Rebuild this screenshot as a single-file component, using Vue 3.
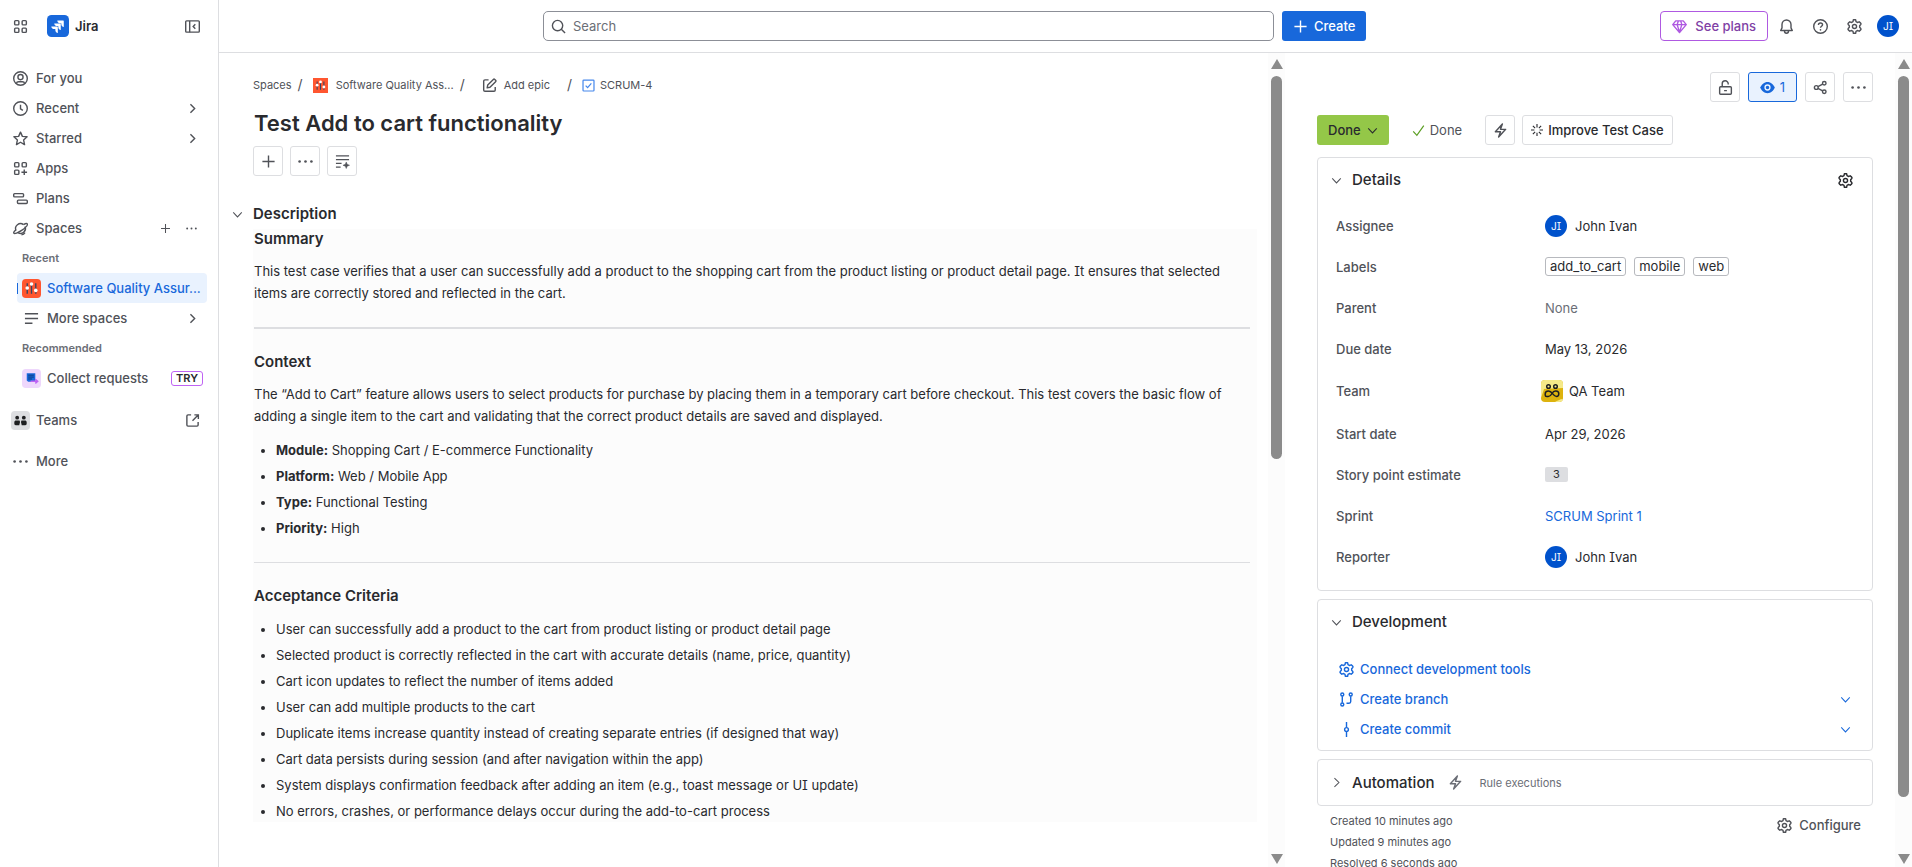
<template>
  <div class="app">
    <nav class="sidebar" aria-label="Sidebar">
      <div class="sidebar-top">
        <button class="icon-btn" aria-label="Switch sites or apps"><Icon name="switcher" /></button>
        <a href="#" class="brand">
          <svg class="logo" viewBox="0 0 24 24">
            <rect width="24" height="24" rx="5" fill="#1868db" />
            <path fill="#fff" d="M9.1 15.3H7.9c-1.9 0-3.2-1.1-3.2-2.8h6.5c.3 0 .6.2.6.6v6.400c-1.600 0-2.700-1.300-2.700-3.100zM12.300 12.100h-1.200c-1.900 0-3.200-1.100-3.200-2.800h6.500c.3 0 .6.3.6.6v6.400c-1.600 0-2.700-1.300-2.700-3.100zM15.600 8.900h-1.200c-1.900 0-3.200-1.200-3.200-2.900h6.500c.4 0 .6.3.6.6V13c-1.600 0-2.700-1.300-2.700-3.100z" />
          </svg>
          <span>Jira</span>
        </a>
        <button class="icon-btn collapse" aria-label="Collapse sidebar"><Icon name="collapse" /></button>
      </div>

      <ul class="nav">
        <li v-for="item in navItems" :key="item.label" class="nav-row">
          <a href="#" class="nav-link"><Icon :name="item.icon" />{{ item.label }}</a>
          <Icon v-if="item.chevron" name="chevronRight" class="row-chevron" />
          <span v-if="item.actions" class="nav-actions">
            <button class="icon-btn" aria-label="Create space"><Icon name="plus" class="small" /></button>
            <button class="icon-btn" aria-label="More actions"><Icon name="dots" class="small" /></button>
          </span>
        </li>
      </ul>

      <div class="nav-sub">
        <h2 class="nav-heading">Recent</h2>
        <a href="#" class="sub-link selected">
          <SpaceIcon class="tile" />
          <span>Software Quality Assur...</span>
        </a>
        <a href="#" class="sub-link">
          <Icon name="list" class="tile-icon" />
          <span>More spaces</span>
          <Icon name="chevronRight" class="row-chevron" />
        </a>
        <h2 class="nav-heading">Recommended</h2>
        <a href="#" class="sub-link">
          <svg class="tile" viewBox="0 0 20 20">
            <rect width="20" height="20" rx="4" fill="#eed7fc" />
            <path d="M5 4.500h9v9H6.500L5 12z" fill="#1868db" />
            <path d="M6.500 6.500h6M6.500 8.500h6M6.500 10.500h4" stroke="#09326c" stroke-width=".8" />
            <path d="M9 13h7M14 10.800l2.500 2.200-2.500 2.200" stroke="#bf63f3" stroke-width="1.600" fill="none" />
          </svg>
          <span>Collect requests</span>
          <span class="try">TRY</span>
        </a>
      </div>

      <ul class="nav nav-bottom">
        <li class="nav-row">
          <a href="#" class="nav-link teams">
            <svg class="tile" viewBox="0 0 20 20">
              <rect width="20" height="20" rx="4" fill="#dddee1" />
              <g fill="#1e1f21">
                <circle cx="6.500" cy="7" r="2" /><circle cx="13.500" cy="7" r="2" />
                <path d="M3.500 11.800c0-1.200.8-1.800 2-1.800H9l.5 1.500-.8 3.500H5c-1 0-1.500-.6-1.500-1.500zM16.500 11.800c0-1.200-.8-1.800-2-1.800H11l-.5 1.500.8 3.500H15c1 0 1.500-.6 1.500-1.500z" />
              </g>
            </svg>
            Teams
          </a>
          <Icon name="external" class="row-external" />
        </li>
        <li class="nav-row">
          <a href="#" class="nav-link"><Icon name="dots" />More</a>
        </li>
      </ul>
    </nav>

    <div class="page">
      <header class="header">
        <div class="header-center">
          <label class="search">
            <Icon name="search" />
            <input type="search" placeholder="Search" aria-label="Search" />
          </label>
          <button class="create"><Icon name="plus" />Create</button>
        </div>
        <div class="header-actions">
          <button class="plans"><Icon name="gem" />See plans</button>
          <button class="icon-btn" aria-label="Notifications"><Icon name="bell" /></button>
          <button class="icon-btn" aria-label="Help"><Icon name="help" /></button>
          <button class="icon-btn" aria-label="Settings"><Icon name="gear" /></button>
          <button class="avatar" aria-label="Your profile">JI</button>
        </div>
      </header>

      <div class="columns">
        <main class="issue">
          <div class="issue-body">
            <nav class="breadcrumbs" aria-label="Breadcrumbs">
              <a href="#">Spaces</a><i>/</i>
              <a href="#" class="crumb-space"><SpaceIcon square class="crumb-tile" />Software Quality Ass...</a><i>/</i>
              <a href="#" class="crumb-epic"><Icon name="edit" />Add epic</a><i>/</i>
              <a href="#" class="crumb-key">
                <svg class="task" viewBox="0 0 16 16" fill="none" stroke="#4688ec" stroke-width="1.500">
                  <rect x="1.250" y="1.250" width="13.500" height="13.500" rx="1" /><path d="M4.500 8.200l2.400 2.500 4.600-5.400" />
                </svg>
                SCRUM-4
              </a>
            </nav>
            <h1>Test Add to cart functionality</h1>
            <div class="quick-actions">
              <button class="box-btn" aria-label="Add"><Icon name="plus" /></button>
              <button class="box-btn" aria-label="More"><Icon name="dots" /></button>
              <button class="box-btn" aria-label="Improve description"><Icon name="textSpark" /></button>
            </div>

            <section>
              <h2 class="section-title">
                <button class="icon-btn" aria-label="Collapse description"><Icon name="chevronDown" class="small" /></button>
                Description
              </h2>
              <div class="description">
                <h3>Summary</h3>
                <p>This test case verifies that a user can successfully add a product to the shopping cart from the product listing or product detail page. It ensures that selected items are correctly stored and reflected in the cart.</p>
                <hr class="thick" />
                <h3>Context</h3>
                <p>The “Add to Cart” feature allows users to select products for purchase by placing them in a temporary cart before checkout. This test covers the basic flow of adding a single item to the cart and validating that the correct product details are saved and displayed.</p>
                <ul>
                  <li v-for="fact in facts" :key="fact.name"><strong>{{ fact.name }}:</strong> {{ fact.value }}</li>
                </ul>
                <hr />
                <h3>Acceptance Criteria</h3>
                <ul>
                  <li v-for="line in criteria" :key="line">{{ line }}</li>
                </ul>
              </div>
            </section>
          </div>
          <ScrollRail :size="49.7" />
        </main>

        <aside class="panel">
          <div class="panel-body">
            <div class="toolbar">
              <button class="box-btn" aria-label="No restrictions"><Icon name="lock" /></button>
              <button class="box-btn watching" aria-label="Watch options"><Icon name="eye" />1</button>
              <button class="box-btn" aria-label="Share"><Icon name="share" /></button>
              <button class="box-btn" aria-label="Actions"><Icon name="dots" /></button>
            </div>
            <div class="status-row">
              <button class="status">Done<Icon name="chevronDown" class="small" /></button>
              <span class="resolution"><Icon name="check" />Done</span>
              <button class="box-btn" aria-label="Run automation"><Icon name="bolt" /></button>
              <button class="box-btn improve"><Icon name="spark" />Improve Test Case</button>
            </div>

            <section class="card details">
              <div class="card-head">
                <button class="card-toggle"><Icon name="chevronDown" class="small" />Details</button>
                <button class="icon-btn dark" aria-label="Configure fields"><Icon name="gear" /></button>
              </div>
              <dl>
                <div class="field">
                  <dt>Assignee</dt>
                  <dd><span class="avatar">JI</span>John Ivan</dd>
                </div>
                <div class="field">
                  <dt>Labels</dt>
                  <dd><a v-for="tag in tags" :key="tag" href="#" class="tag">{{ tag }}</a></dd>
                </div>
                <div class="field">
                  <dt>Parent</dt>
                  <dd class="none">None</dd>
                </div>
                <div class="field">
                  <dt>Due date</dt>
                  <dd>May 13, 2026</dd>
                </div>
                <div class="field tall">
                  <dt>Team</dt>
                  <dd class="team">
                    <svg class="team-tile" viewBox="0 0 22 22">
                      <rect width="22" height="22" rx="4" fill="#ddb30e" />
                      <path d="M4 0h14a4 4 0 0 1 4 4v4L3 9 0 18V4a4 4 0 0 1 4-4z" fill="#f5e989" />
                      <path d="M14 22c2-1 5-3 8-3a4 4 0 0 1-4 3z" fill="#f5e989" />
                      <g fill="none" stroke="#1e1f21" stroke-width="1.500">
                        <circle cx="7.500" cy="6.500" r="1.800" /><circle cx="14.500" cy="6.500" r="1.800" />
                        <path d="M11 13.500c.8-1.500 1.800-2.500 3.500-2.500h.5c1.800 0 2.800 1 2.800 2.800 0 1.700-.8 2.700-2.300 2.700-3.500 0-4-5.500-8-5.500C5.200 11 4.200 12.200 4.200 14v1c0 1 .6 1.500 1.500 1.500h1.600c1.800 0 2.700-1.200 3.700-3z" />
                      </g>
                    </svg>
                    QA Team
                  </dd>
                </div>
                <div class="field">
                  <dt>Start date</dt>
                  <dd>Apr 29, 2026</dd>
                </div>
                <div class="field">
                  <dt>Story point estimate</dt>
                  <dd><span class="points">3</span></dd>
                </div>
                <div class="field">
                  <dt>Sprint</dt>
                  <dd><a href="#">SCRUM Sprint 1</a></dd>
                </div>
                <div class="field">
                  <dt>Reporter</dt>
                  <dd><span class="avatar">JI</span>John Ivan</dd>
                </div>
              </dl>
            </section>

            <section class="card development">
              <div class="card-head">
                <button class="card-toggle"><Icon name="chevronDown" class="small" />Development</button>
              </div>
              <div class="dev-row">
                <a href="#"><Icon name="gear" />Connect development tools</a>
              </div>
              <div class="dev-row">
                <a href="#"><Icon name="branch" />Create branch</a>
                <button class="icon-btn" aria-label="Branch options"><Icon name="chevronDown" class="small" /></button>
              </div>
              <div class="dev-row">
                <a href="#"><Icon name="commit" />Create commit</a>
                <button class="icon-btn" aria-label="Commit options"><Icon name="chevronDown" class="small" /></button>
              </div>
            </section>

            <section class="card automation">
              <button class="card-toggle"><Icon name="chevronClosed" class="small" />Automation</button>
              <Icon name="bolt" />
              <span class="rule">Rule executions</span>
            </section>

            <footer class="footer">
              <div class="dates">
                <p>Created 10 minutes ago</p>
                <p>Updated 9 minutes ago</p>
                <p>Resolved 6 seconds ago</p>
              </div>
              <button class="configure"><Icon name="gear" />Configure</button>
            </footer>
          </div>
          <ScrollRail :size="93.5" />
        </aside>
      </div>
    </div>
  </div>
</template>

<script setup>
import { h } from 'vue'

const glyphs = {
  switcher: '<rect x="1.750" y="1.750" width="4.500" height="4.500" rx="1"/><rect x="9.750" y="1.750" width="4.500" height="4.500" rx="1"/><rect x="1.750" y="9.750" width="4.500" height="4.500" rx="1"/><rect x="9.750" y="9.750" width="4.500" height="4.500" rx="1"/>',
  collapse: '<rect x=".75" y="2" width="14.500" height="12" rx="1"/><path d="M5 2v12M11 5.500L8.700 8l2.300 2.500"/>',
  person: '<circle cx="8" cy="8" r="7.250"/><circle cx="8" cy="6.500" r="2.750"/><path d="M3.500 13.500c.4-1.600 1.500-2 2.500-2h4c1 0 2.100.4 2.500 2"/>',
  clock: '<circle cx="8" cy="8" r="7.250"/><path d="M8 4v4.300l2.500 1.700"/>',
  star: '<path d="M8 1.200l2 4.500 5 .5-3.700 3.300 1 5L8 12l-4.300 2.500 1-5L1 6.200l5-.5z" stroke-linejoin="round"/>',
  apps: '<rect x="1.750" y="1.750" width="4.500" height="4.500" rx="1"/><rect x="9.750" y="1.750" width="4.500" height="4.500" rx="1"/><rect x="1.750" y="9.750" width="4.500" height="4.500" rx="1"/><path d="M12 9v6M9 12h6"/>',
  plans: '<rect x=".75" y="2.750" width="10.500" height="3.500" rx="1"/><rect x="4.750" y="9.750" width="10.500" height="3.500" rx="1"/>',
  planet: '<path d="M3.200 10.200A5.300 5.300 0 0 1 11.200 3.800M12.800 5.800a5.300 5.300 0 0 1-7.200 6.900"/><path d="M11.200 3.800c2.200-1.200 3.600-1.300 4-.7.700 1.100-2 4.200-6 6.900-4 2.700-7.600 4.100-8.300 3-.4-.6.300-2 2.300-3.600"/><path d="M9 14.800c1.600-.4 3-1.300 3.800-2.500" />',
  plus: '<path d="M8 1.500v13M1.500 8h13"/>',
  dots: '<g fill="currentColor" stroke="none"><circle cx="1.700" cy="8" r="1.400"/><circle cx="8" cy="8" r="1.400"/><circle cx="14.300" cy="8" r="1.400"/></g>',
  chevronRight: '<path d="M5.800 3.500L10.300 8l-4.500 4.500"/>',
  chevronClosed: '<path d="M5 1.800L11.500 8 5 14.200"/>',
  chevronDown: '<path d="M1.800 5L8 11.500 14.200 5"/>',
  list: '<path d="M1 3h14M1 8h14M1 13h8"/>',
  external: '<path d="M6.500 2H3.200c-.8 0-1.200.4-1.200 1.200v9.600c0 .8.400 1.200 1.200 1.200h9.600c.8 0 1.200-.4 1.200-1.200V9.500M10 2h4.250v4.500M14 2.200L8 8.200"/>',
  search: '<circle cx="7" cy="7" r="5.500"/><path d="M11 11l4 4"/>',
  gem: '<path d="M4 2h8l3.200 4L8 14.500.8 6zM.8 6h14.400M5.500 6L8 14l2.500-8M5.500 6l1.300-4M10.500 6L9.200 2" stroke-linejoin="round"/>',
  bell: '<path d="M3.200 9.500V5.800a4.800 4.800 0 0 1 9.600 0v3.700l1.400 2.750H1.800zM5.800 12.500c0 1.600 1 2.700 2.200 2.700s2.200-1.100 2.200-2.700" stroke-linejoin="round"/>',
  help: '<circle cx="8" cy="8" r="7.250"/><path d="M5.800 6.300c0-1.400 1-2.100 2.200-2.100s2.200.7 2.200 2c0 1.500-2.200 1.500-2.200 3.200"/><circle cx="8" cy="11.500" r=".9" fill="currentColor" stroke="none"/>',
  gear: '<path d="M6.400 2.900L6.800.8h2.400l.4 2.100 1.400.8 2-.7 1.600 1.400c.4.400.4.900.1 1.400L13.500 7.200v1.600l1.200 1.400c.3.500.3 1-.1 1.400L13 13l-2-.7-1.400.8-.4 2.100H6.800l-.4-2.100-1.400-.8-2 .7-1.600-1.400c-.4-.4-.4-.9-.1-1.400l1.200-1.400V7.200L1.300 5.800c-.3-.5-.3-1 .1-1.400L3 3l2 .7z" stroke-linejoin="round"/><circle cx="8" cy="8" r="2.200"/>',
  edit: '<path d="M7 2H3.200C2.300 2 1.800 2.500 1.800 3.300v9.600c0 .8.500 1.300 1.400 1.300h9.600c.8 0 1.300-.5 1.300-1.300V9.500M5.500 10.500l.6-3 6-6c.5-.5 1-.5 1.500 0l.9.9c.5.500.5 1 0 1.500l-6 6z" stroke-linejoin="round"/>',
  textSpark: '<path d="M1 2h14M1 6h14M1 10h6M1 14h5"/><path d="M12 8.500l1 2.500 2.500 1-2.500 1-1 2.500-1-2.500-2.500-1 2.500-1z" fill="currentColor" stroke-width=".5"/>',
  lock: '<rect x="1.750" y="7.250" width="12.500" height="8" rx="1"/><path d="M4.500 7V4a3.200 3.200 0 0 1 6.400 0v.8M6.500 11.300h3"/>',
  eye: '<path d="M8 2c3.500 0 6.500 2.700 7.700 6-1.200 3.300-4.200 6-7.700 6S1.500 11.300.3 8C1.500 4.700 4.500 2 8 2z" fill="currentColor" stroke="none"/><circle cx="8" cy="8" r="2.600" stroke="#e9f2fe"/>',
  share: '<circle cx="3.500" cy="8" r="2"/><circle cx="12" cy="3.500" r="1.900"/><circle cx="12" cy="12.500" r="1.900"/><path d="M5.300 7.100l5-2.700M5.300 8.900l5 2.700"/>',
  check: '<path d="M1.500 9l4.500 5 8.500-12"/>',
  bolt: '<path d="M10 1L2.500 9.250H8L6 15l7.500-8.250H8z" stroke-linejoin="round"/>',
  spark: '<path d="M8 0v4.500M8 11.500V16M0 8h4.500M11.500 8H16M2.500 2.500l3 3M10.500 10.500l3 3M13.500 2.500l-3 3M5.500 10.500l-3 3"/>',
  branch: '<circle cx="3.500" cy="2.700" r="1.600"/><circle cx="3.500" cy="13.300" r="1.600"/><circle cx="12.500" cy="2.700" r="1.600"/><path d="M3.500 4.500v7M12.500 4.500v5.700c0 1.200-.6 1.800-1.800 1.800H8"/>',
  commit: '<path d="M8 0v5.500M8 10.500V16"/><circle cx="8" cy="8" r="2"/>'
}

const Icon = (props) => h('svg', {
  class: 'icon',
  viewBox: '0 0 16 16',
  fill: 'none',
  stroke: 'currentColor',
  'stroke-width': 1.5,
  'aria-hidden': 'true',
  innerHTML: glyphs[props.name]
})
Icon.props = ['name']

const SpaceIcon = (props) => h('svg', {
  viewBox: '0 0 20 20',
  'aria-hidden': 'true',
  innerHTML: `<rect width="20" height="20" rx="${props.square ? 0 : 4}" fill="#ff5630"/>
    <path d="M5.500 4.500v11M10 4v11.500M14.500 4.500v11" stroke="#344563" stroke-width="1.400"/>
    <g fill="#fff"><circle cx="5.500" cy="9.500" r="1.900"/><circle cx="10" cy="5.200" r="1.900"/><circle cx="14.500" cy="12" r="1.900"/></g>`
})
SpaceIcon.props = { square: Boolean }

const ScrollRail = (props) => h('div', { class: 'rail', 'aria-hidden': 'true' }, [
  h('span', { class: 'rail-up' }),
  h('div', { class: 'rail-track' }, [
    h('div', { class: 'rail-thumb', style: { height: `${props.size}%` } })
  ]),
  h('span', { class: 'rail-down' })
])
ScrollRail.props = ['size']

const navItems = [
  { label: 'For you', icon: 'person' },
  { label: 'Recent', icon: 'clock', chevron: true },
  { label: 'Starred', icon: 'star', chevron: true },
  { label: 'Apps', icon: 'apps' },
  { label: 'Plans', icon: 'plans' },
  { label: 'Spaces', icon: 'planet', actions: true }
]

const facts = [
  { name: 'Module', value: 'Shopping Cart / E-commerce Functionality' },
  { name: 'Platform', value: 'Web / Mobile App' },
  { name: 'Type', value: 'Functional Testing' },
  { name: 'Priority', value: 'High' }
]

const criteria = [
  'User can successfully add a product to the cart from product listing or product detail page',
  'Selected product is correctly reflected in the cart with accurate details (name, price, quantity)',
  'Cart icon updates to reflect the number of items added',
  'User can add multiple products to the cart',
  'Duplicate items increase quantity instead of creating separate entries (if designed that way)',
  'Cart data persists during session (and after navigation within the app)',
  'System displays confirmation feedback after adding an item (e.g., toast message or UI update)',
  'No errors, crashes, or performance delays occur during the add-to-cart process'
]

const tags = ['add_to_cart', 'mobile', 'web']
</script>

<style>
body {
  background: #fff;
}

.rail {
  flex: none;
  width: 17px;
  box-sizing: border-box;
  padding: 6px 0 3px;
  display: flex;
  flex-direction: column;
  align-items: center;
  gap: 7px;
  background: #fcfcfc;
}

.rail-up,
.rail-down {
  border: 6px solid transparent;
  border-top-width: 0;
  border-bottom: 10px solid #8b8b8b;
}

.rail-down {
  border-top: 10px solid #8b8b8b;
  border-bottom-width: 0;
}

.rail-track {
  flex: 1;
  width: 11px;
}

.rail-thumb {
  border-radius: 6px;
  background: #8b8b8b;
}
</style>

<style scoped>
.app {
  display: flex;
  height: 100vh;
  overflow: hidden;
  font-family: Inter, "Liberation Sans", sans-serif;
  font-feature-settings: "cv08";
  font-size: 13px;
  line-height: 20px;
  color: #292a2e;
}

a {
  color: inherit;
  text-decoration: none;
}

button {
  font: inherit;
  font-feature-settings: inherit;
  color: inherit;
  border: 0;
  padding: 0;
  background: none;
  cursor: pointer;
}

h1, h2, h3, p, ul, dl, dd {
  margin: 0;
  padding: 0;
}

.icon {
  flex: none;
  width: 15px;
  height: 15px;
}

.icon.small {
  width: 11px;
  height: 11px;
}

.icon-btn {
  display: flex;
  align-items: center;
  justify-content: center;
  color: #505258;
}

.icon-btn.dark {
  color: #292a2e;
}

/* sidebar */
.sidebar {
  flex: none;
  width: 218px;
  border-right: 1px solid #dddee1;
  color: #505258;
  font-weight: 500;
}

.sidebar-top {
  display: flex;
  align-items: center;
  height: 52px;
  padding: 0 18px 0 13px;
  margin-bottom: 11px;
}

.brand {
  display: flex;
  align-items: center;
  gap: 6px;
  margin-left: 19px;
  font-weight: 600;
  color: #292a2e;
}

.logo {
  width: 22px;
  height: 22px;
}

.collapse {
  margin-left: auto;
}

.nav {
  list-style: none;
  padding: 0 17px 0 13px;
}

.nav-row {
  display: flex;
  align-items: center;
  height: 30px;
}

.nav-link {
  flex: 1;
  display: flex;
  align-items: center;
  gap: 8px;
}

.nav-actions {
  display: flex;
  gap: 15px;
  margin-right: 4px;
}

.row-chevron {
  margin-left: auto;
}

.nav-row .row-chevron,
.row-external {
  margin-right: 1px;
}

.nav-sub {
  padding: 0 11px 0 17px;
}

.nav-heading {
  padding-left: 5px;
  font-size: 11px;
  font-weight: 600;
  line-height: 30px;
  color: #6b6e76;
}

.sub-link {
  display: flex;
  align-items: center;
  gap: 6px;
  height: 30px;
  padding: 0 7px 0 5px;
  border-radius: 4px;
  white-space: nowrap;
}

.sub-link.selected {
  padding-right: 0;
  background: linear-gradient(#1868db, #1868db) left center / 1px 11px no-repeat #e9f2fe;
  color: #1868db;
}

.tile {
  flex: none;
  width: 19px;
  height: 19px;
}

.tile-icon {
  margin: 0 2px;
}

.try {
  margin-left: auto;
  margin-right: -3px;
  padding: 0 4px;
  border: 1px solid #bf63f3;
  border-radius: 3px;
  font-size: 11px;
  font-weight: 600;
  line-height: 13px;
  color: #292a2e;
}

.nav-bottom {
  display: flex;
  flex-direction: column;
  gap: 11px;
  margin-top: 12px;
}

.teams {
  gap: 6px;
  margin-left: -2px;
}

/* header */
.page {
  flex: 1;
  min-width: 0;
  display: flex;
  flex-direction: column;
}

.header {
  flex: none;
  display: flex;
  align-items: center;
  height: 52px;
  padding: 0 13px 0 30px;
  border-bottom: 1px solid #dddee1;
}

.header-center {
  flex: 1;
  display: flex;
  justify-content: center;
  gap: 8px;
}

.search {
  flex: 1;
  max-width: 731px;
  box-sizing: border-box;
  display: flex;
  align-items: center;
  gap: 7px;
  height: 30px;
  padding: 0 7px;
  border: 1px solid #8c8f97;
  border-radius: 5px;
  color: #505258;
}

.search input {
  flex: 1;
  padding: 0;
  border: 0;
  outline: 0;
  background: none;
  font: inherit;
}

.search input::placeholder {
  color: #6b6e76;
  opacity: 1;
}

.create {
  display: flex;
  align-items: center;
  gap: 6px;
  height: 30px;
  padding: 0 11px;
  border-radius: 3px;
  background: #1868db;
  color: #fff;
  font-weight: 500;
}

.header-actions {
  display: flex;
  align-items: center;
  gap: 19px;
}

.header-actions .avatar {
  margin-left: -4px;
}

.plans {
  display: flex;
  align-items: center;
  gap: 8px;
  height: 30px;
  margin-right: -8px;
  padding: 0 11px;
  border: 1px solid #af59e1;
  border-radius: 4px;
  color: #803fa5;
  font-weight: 500;
}

.plans .icon {
  color: #af59e1;
}

.avatar {
  width: 22px;
  height: 22px;
  border-radius: 50%;
  background: #0052cc;
  color: #fff;
  font-size: 10px;
  line-height: 22px;
  text-align: center;
}

/* issue column */
.columns {
  flex: 1;
  min-height: 0;
  display: grid;
  grid-template-columns: minmax(0, 1fr) 627px;
}

.issue {
  display: flex;
  min-height: 0;
}

.issue-body {
  flex: 1;
  min-width: 0;
  padding: 22px 11px 0 34px;
}

.breadcrumbs {
  display: flex;
  align-items: center;
  font-size: 11px;
  color: #505258;
}

.breadcrumbs a {
  display: flex;
  align-items: center;
}

.breadcrumbs i {
  font-style: normal;
  font-size: 14px;
  margin: 0 6px;
}

.crumb-space {
  gap: 8px;
  margin-left: 4px;
}

.crumb-epic {
  gap: 7px;
  margin: 0 11px;
}

.crumb-key {
  gap: 5px;
  margin-left: 4px;
}

.crumb-tile {
  width: 15px;
  height: 15px;
}

.task {
  width: 13px;
  height: 13px;
}

h1 {
  margin: 14px 0 8px 1px;
  font-size: 22px;
  font-weight: 600;
  line-height: 29px;
}

.quick-actions {
  display: flex;
  gap: 7px;
}

.box-btn {
  display: flex;
  align-items: center;
  justify-content: center;
  gap: 5px;
  box-sizing: border-box;
  width: 30px;
  height: 30px;
  border: 1px solid #dddee1;
  border-radius: 3px;
  color: #505258;
}

.section-title {
  display: flex;
  align-items: center;
  gap: 10px;
  margin: 28px 0 5px -21px;
  font-size: 15px;
  font-weight: 600;
  line-height: 20px;
}

.description {
  padding: 0 7px 0 1px;
  background: #fcfcfc;
}

.description h3 {
  font-size: 15px;
  font-weight: 600;
  line-height: 20px;
}

.description p {
  margin-top: 11px;
  line-height: 22px;
}

.description hr {
  height: 1px;
  margin: 23px 0;
  border: 0;
  background: #dddee1;
}

.description hr.thick {
  height: 2px;
}

.description ul {
  margin-top: 12px;
  padding-left: 22px;
  line-height: 22px;
}

.description li + li {
  margin-top: 4px;
}

.description strong {
  font-weight: 700;
}

/* right panel */
.panel {
  display: flex;
  min-height: 0;
  overflow: hidden;
}

.panel-body {
  flex: 1;
  min-width: 0;
  padding: 19px 22px 0 32px;
}

.toolbar {
  display: flex;
  justify-content: flex-end;
  gap: 8px;
}

.watching {
  width: 49px;
  border-color: #1868db;
  background: #e9f2fe;
  color: #1868db;
}

.status-row {
  display: flex;
  align-items: center;
  gap: 7px;
  margin: 13px 0 12px;
}

.status {
  display: flex;
  align-items: center;
  gap: 6px;
  height: 30px;
  padding: 0 11px;
  border-radius: 3px;
  background: #94c748;
  font-weight: 500;
}

.resolution {
  display: flex;
  align-items: center;
  gap: 5px;
  margin: 0 16px;
  color: #505258;
}

.resolution .icon {
  width: 13px;
  height: 13px;
  color: #5b9e23;
}

.improve {
  width: auto;
  padding: 0 8px;
  color: #292a2e;
  font-feature-settings: normal;
  font-weight: 500;
}

.improve .icon {
  width: 12px;
  height: 12px;
}

.card {
  border: 1px solid #dddee1;
  border-radius: 4px;
  margin-bottom: 8px;
}

.card-head {
  display: flex;
  align-items: center;
  justify-content: space-between;
  height: 44px;
  padding: 0 19px 0 13px;
}

.card-toggle {
  display: flex;
  align-items: center;
  gap: 10px;
  font-size: 15px;
  font-weight: 500;
}

.card-toggle .icon {
  color: #505258;
}

.details {
  padding-bottom: 13px;
}

.details .card-head {
  margin-bottom: 3px;
}

.field {
  display: grid;
  grid-template-columns: 209px 1fr;
  align-items: center;
  height: 41px;
  padding-left: 18px;
}

.field.tall {
  height: 44px;
}

dt {
  color: #505258;
  font-weight: 500;
}

dd {
  display: flex;
  align-items: center;
  gap: 8px;
}

dd.none {
  color: #6b6e76;
}

dd.team {
  gap: 6px;
  margin-left: -4px;
}

dd a {
  color: #1868db;
}

.team-tile {
  width: 22px;
  height: 22px;
}

dd .tag {
  padding: 0 4px;
  border: 1px solid #b7b9be;
  border-radius: 3px;
  color: #292a2e;
  line-height: 17px;
}

.points {
  padding: 0 8px;
  border-radius: 2px;
  background: #dddee1;
  font-size: 11px;
  line-height: 15px;
}

.development {
  padding-bottom: 6px;
}

.development .card-head {
  margin-bottom: 10px;
}

.dev-row {
  display: flex;
  align-items: center;
  justify-content: space-between;
  height: 30px;
  padding: 0 21px;
  color: #1868db;
}

.dev-row a {
  display: flex;
  align-items: center;
  gap: 6px;
  font-weight: 500;
}

.dev-row .icon-btn {
  color: #1868db;
}

.automation {
  display: flex;
  align-items: center;
  gap: 13px;
  height: 45px;
  margin-bottom: 5px;
  padding-left: 13px;
  color: #6b6e76;
}

.automation .card-toggle {
  color: #292a2e;
}

.rule {
  margin-left: 4px;
  font-size: 11px;
}

.footer {
  display: flex;
  justify-content: space-between;
  align-items: flex-start;
  padding: 0 12px 0 13px;
  color: #505258;
}

.dates {
  font-size: 11px;
  line-height: 21px;
}

.configure {
  display: flex;
  align-items: center;
  gap: 7px;
  margin-top: 4px;
  font-weight: 500;
}
</style>
